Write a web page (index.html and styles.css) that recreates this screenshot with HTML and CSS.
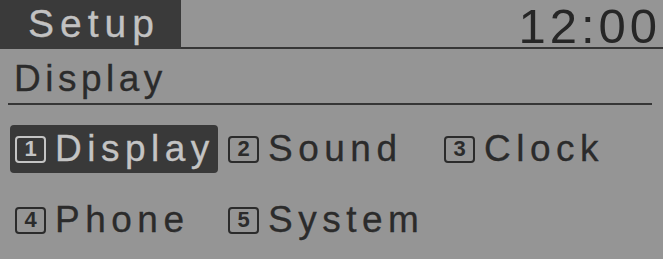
FILE: index.html
```html
<!DOCTYPE html>
<html lang="en">
<head>
<meta charset="utf-8">
<title>Setup</title>
<link rel="stylesheet" href="styles.css">
</head>
<body>
<div class="screen">
  <header class="header">
    <div class="title">Setup</div>
    <div class="clock-area"><span class="clock">12:00</span></div>
  </header>
  <div class="subhead">Display</div>
  <div class="menu">
    <div class="item active"><span class="num">1</span><span class="label">Display</span></div>
    <div class="item"><span class="num">2</span><span class="label">Sound</span></div>
    <div class="item"><span class="num">3</span><span class="label">Clock</span></div>
    <div class="item"><span class="num">4</span><span class="label">Phone</span></div>
    <div class="item"><span class="num">5</span><span class="label">System</span></div>
  </div>
</div>
</body>
</html>
```

FILE: styles.css
```css
html, body {
  margin: 0;
  padding: 0;
  background: #959595;
}

.screen {
  width: 663px;
  height: 259px;
  overflow: hidden;
  font-family: "Liberation Sans", Arial, sans-serif;
  color: #2b2b2b;
}

.header {
  display: flex;
  height: 49px;
}

.title {
  width: 153px;
  height: 49px;
  padding-left: 28px;
  background: #3a3a3a;
  color: #c2c2c2;
  font-size: 39px;
  line-height: 48px;
  letter-spacing: 6px;
  -webkit-text-stroke: 0.3px #c2c2c2;
}

.clock-area {
  flex: 1;
  display: flex;
  justify-content: flex-end;
  align-items: flex-start;
  height: 47px;
  border-bottom: 2px solid #363636;
  padding-right: 2px;
}

.clock {
  font-size: 49px;
  line-height: 53px;
  letter-spacing: 4px;
  color: #262626;
}

.subhead {
  margin: 0 11px 0 8px;
  padding: 6px 0 0 6px;
  height: 48px;
  line-height: 48px;
  font-size: 37px;
  letter-spacing: 4.5px;
  border-bottom: 2px solid #363636;
  -webkit-text-stroke: 0.3px #2b2b2b;
}

.menu {
  display: grid;
  grid-template-columns: 213px 216px 1fr;
  row-gap: 23px;
  padding: 20px 0 0 10px;
}

.item {
  justify-self: start;
  display: flex;
  align-items: center;
  height: 48px;
  padding: 0 6px 0 5px;
  border-radius: 4px;
  -webkit-text-stroke: 0.3px currentColor;
}

.item.active {
  padding-right: 3px;
  background: #393939;
  color: #c4c4c4;
}

.num {
  box-sizing: border-box;
  width: 31px;
  height: 27px;
  margin-right: 9px;
  border: 2px solid currentColor;
  border-radius: 4px;
  display: flex;
  align-items: center;
  justify-content: center;
  font-size: 22px;
  font-weight: bold;
  line-height: 1;
  -webkit-text-stroke: 0;
}

.label {
  font-size: 37px;
  letter-spacing: 5.5px;
}
```
